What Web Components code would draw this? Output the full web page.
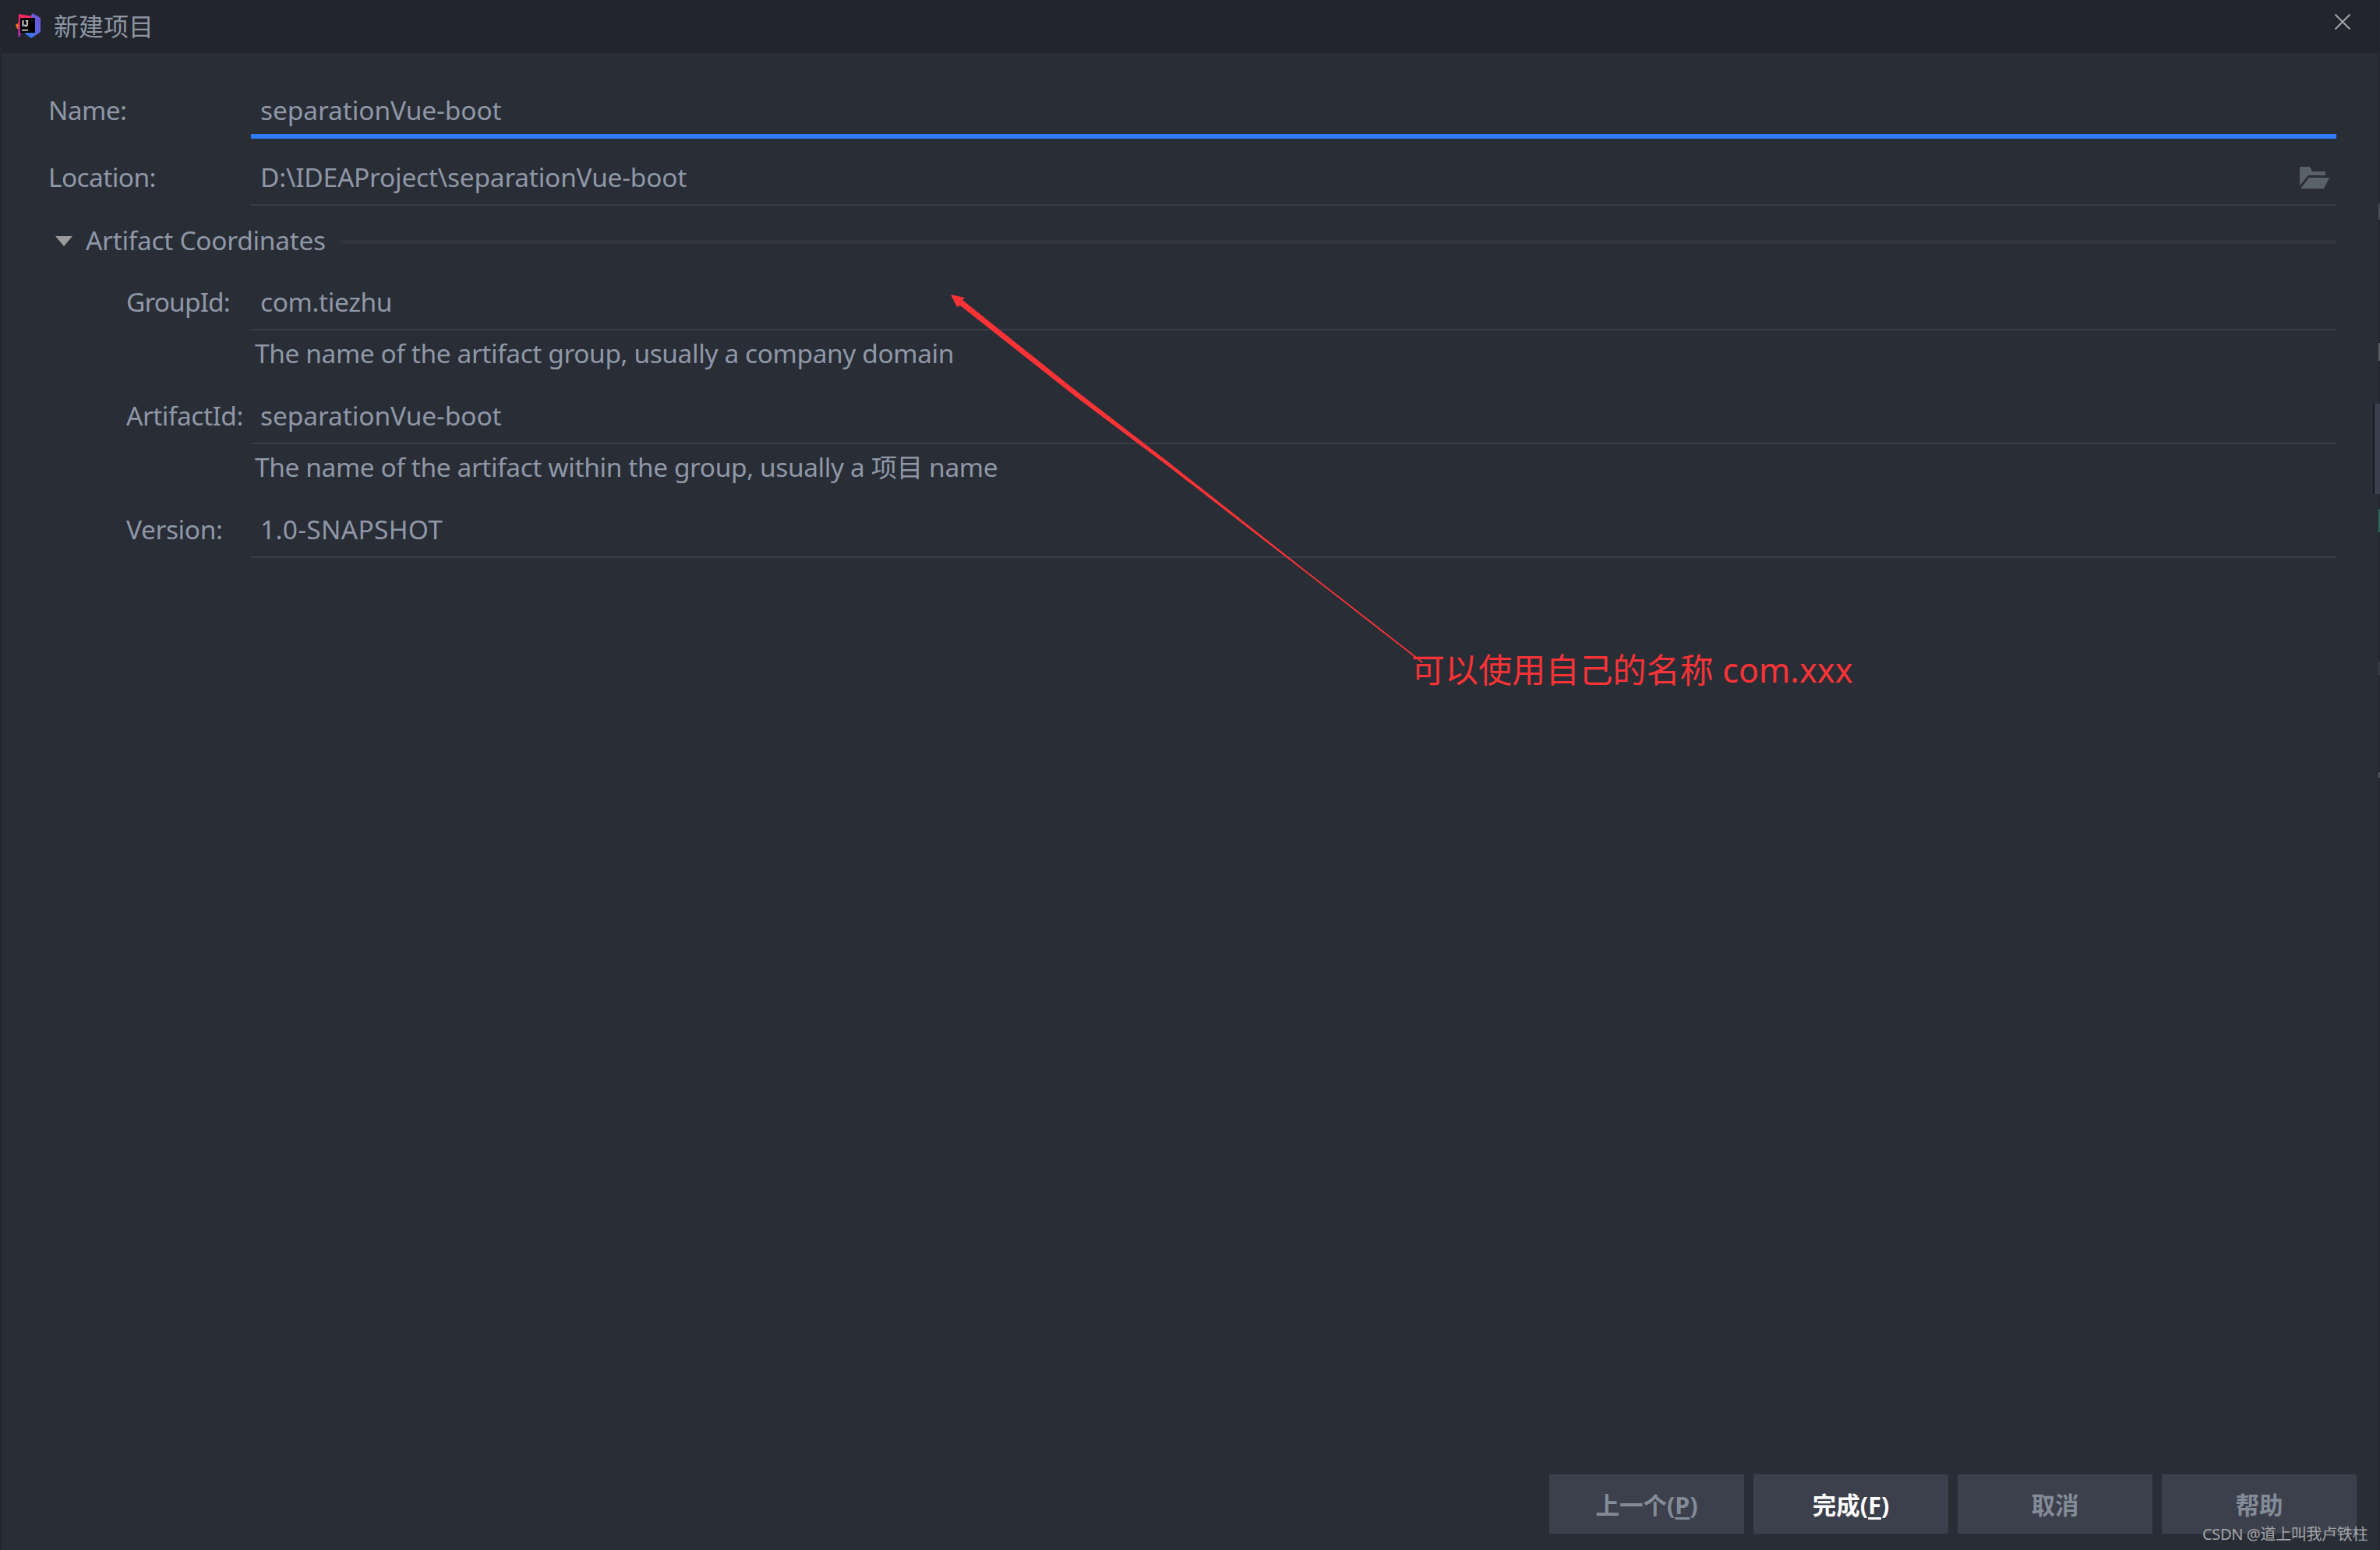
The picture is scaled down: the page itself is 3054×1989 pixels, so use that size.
<!DOCTYPE html>
<html lang="zh">
<head>
<meta charset="utf-8">
<title>新建项目</title>
<style>
html,body{margin:0;height:100%;background:#292d36;}
body{font-family:"Noto Sans","Noto Sans CJK SC",sans-serif;color:#8f97a7;overflow:hidden;}
</style>
</head>
<body>
<new-project-dialog>
    <title-bar slot="title">新建项目</title-bar>

    <form-field label="Name:" focused style="--track:-0.1px">separationVue-boot</form-field>
    <form-field label="Location:" style="margin-top:20px;--track:-0.24px" browse>D:\IDEAProject\separationVue-boot</form-field>
    <section-head style="margin-top:22px">Artifact Coordinates</section-head>
    <form-field label="GroupId:" nested style="margin-top:26px;--track:-0.4px;--label-track:-0.9px">com.tiezhu</form-field>
    <hint-text>The name of the artifact group, usually a company domain</hint-text>
    <form-field label="ArtifactId:" nested style="--track:-0.1px;--label-track:-0.5px">separationVue-boot</form-field>
    <hint-text>The name of the artifact within the group, usually a 项目 name</hint-text>
    <form-field label="Version:" nested style="--track:0.3px;--label-track:-0.4px">1.0-SNAPSHOT</form-field>

    <dialog-button slot="buttons" mnemonic="P">上一个</dialog-button>
    <dialog-button slot="buttons" mnemonic="F" primary>完成</dialog-button>
    <dialog-button slot="buttons">取消</dialog-button>
    <dialog-button slot="buttons">帮助</dialog-button>
</new-project-dialog>
<red-annotation>可以使用自己的名称 com.xxx</red-annotation>
<csdn-mark>CSDN @道上叫我卢铁柱</csdn-mark>

<script>
const dialogTemplate = document.createElement('template');
dialogTemplate.innerHTML = `
    <style>
    :host{display:flex;flex-direction:column;height:1989px;box-sizing:border-box;border-left:2px solid #23262e;border-right:2px solid #24272f;background:#292d36;position:relative;}
    #form{flex:1;padding:44px 54px 0 60px;}
    #buttons{display:flex;justify-content:flex-end;gap:12px;padding:0 28px 21px 0;}
    .peek{position:absolute;right:-2px;}
    </style>
    <slot name="title"></slot>
    <div id="form"><slot></slot></div>
    <div id="buttons"><slot name="buttons"></slot></div>
    <div class="peek" style="top:261px;width:2px;height:21px;background:#4a4e58"></div>
    <div class="peek" style="top:440px;width:2px;height:23px;background:#5a5d64"></div>
    <div class="peek" style="top:518px;width:9px;height:116px;background:#3a3e4d;border-left:2px solid #181a22;box-sizing:border-box"></div>
    <div class="peek" style="top:653px;width:2px;height:30px;background:#2b6d5c"></div>
    <div class="peek" style="top:849px;width:2px;height:17px;background:#3a3e46"></div>
    <div class="peek" style="top:991px;width:2px;height:7px;background:#55585f"></div>
`;
class NewProjectDialog extends HTMLElement {
    constructor() {
        super();
        this.attachShadow({mode: 'open'});
        this.shadowRoot.appendChild(dialogTemplate.content.cloneNode(true));
    }
}

const titleTemplate = document.createElement('template');
titleTemplate.innerHTML = `
    <style>
    :host{display:flex;align-items:center;height:68px;background:#22252d;padding:0 36px 0 18px;flex:none;}
    #logo{width:32px;height:32px;flex:none;margin-top:-2px;}
    #text{margin-left:17px;font-size:32px;line-height:68px;color:#8d95a3;flex:1;margin-top:-1px;}
    #close{width:20px;height:20px;flex:none;margin-top:-12px;}
    </style>
    <svg id="logo" viewBox="0 0 32 32">
        <defs>
            <linearGradient id="blue" x1="0" y1="1" x2="1" y2="0"><stop offset="0" stop-color="#2f7df2"/><stop offset="1" stop-color="#7a4fd0"/></linearGradient>
            <linearGradient id="pink" x1="0" y1="0" x2="0" y2="1"><stop offset="0" stop-color="#fe2857"/><stop offset="1" stop-color="#9a2ba8"/></linearGradient>
        </defs>
        <polygon points="22,0 32,6 32,24 20,32 12,26 16,8" fill="url(#blue)"/>
        <polygon points="0,15 6,11 8,20 2,20" fill="#f97a12"/>
        <polygon points="4,1 22,4 8,14 6,30 3,30" fill="url(#pink)"/>
        <rect x="6" y="6" width="19" height="19" fill="#000"/>
        <text x="8" y="17" font-family="Liberation Sans" font-weight="700" font-size="10" fill="#fff">IJ</text>
        <rect x="8" y="21" width="8" height="1.4" fill="#fff"/>
    </svg>
    <div id="text"><slot></slot></div>
    <svg id="close" viewBox="0 0 20 20"><path d="M0.5 0.5L19.5 19.5M19.5 0.5L0.5 19.5" stroke="#a4a6a9" stroke-width="2" fill="none"/></svg>
`;
class TitleBar extends HTMLElement {
    constructor() {
        super();
        this.attachShadow({mode: 'open'});
        this.shadowRoot.appendChild(titleTemplate.content.cloneNode(true));
    }
}

const fieldTemplate = document.createElement('template');
fieldTemplate.innerHTML = `
    <style>
    :host{display:flex;align-items:flex-end;height:66px;font-size:33.5px;line-height:40px;color:#8f97a7;}
    :host([nested]){padding-left:100px;}
    #label{width:260px;flex:none;padding-bottom:17px;box-sizing:border-box;white-space:nowrap;letter-spacing:var(--label-track,-0.6px);}
    :host([nested]) #label{width:160px;}
    #value{flex:1;height:66px;box-sizing:border-box;display:flex;align-items:flex-end;padding:0 9px 15px 12px;border-bottom:2px solid #393d49;}
    :host([focused]) #value{border-bottom:6px solid #2d7cf6;padding-bottom:11px;}
    #text{flex:1;letter-spacing:var(--track,0);}
    svg{display:none;width:38px;height:28px;flex:none;margin-bottom:5px;}
    :host([browse]) svg{display:block;}
    </style>
    <div id="label"></div>
    <div id="value">
        <div id="text"><slot></slot></div>
        <svg viewBox="0 0 38 28"><path fill="#59626b" d="M0 0H13L16 6H33V11H11L0 24ZM12 14H38L31 28H1Z"/></svg>
    </div>
`;
class FormField extends HTMLElement {
    constructor() {
        super();
        this.attachShadow({mode: 'open'});
        this.shadowRoot.appendChild(fieldTemplate.content.cloneNode(true));
    }
    connectedCallback() {
        this.shadowRoot.querySelector('#label').textContent = this.getAttribute('label');
    }
}

const sectionTemplate = document.createElement('template');
sectionTemplate.innerHTML = `
    <style>
    :host{display:flex;align-items:center;height:46px;font-size:33.5px;line-height:40px;color:#8f97a7;}
    #arrow{width:0;height:0;flex:none;margin-left:9px;border-left:11px solid transparent;border-right:11px solid transparent;border-top:13px solid #9b9b9b;}
    #text{margin-left:17px;white-space:nowrap;margin-top:-3px;letter-spacing:-0.3px;}
    #line{flex:1;height:5px;background:#31343e;margin-left:18px;margin-top:3px;}
    </style>
    <div id="arrow"></div>
    <div id="text"><slot></slot></div>
    <div id="line"></div>
`;
class SectionHead extends HTMLElement {
    constructor() {
        super();
        this.attachShadow({mode: 'open'});
        this.shadowRoot.appendChild(sectionTemplate.content.cloneNode(true));
    }
}

const hintTemplate = document.createElement('template');
hintTemplate.innerHTML = `
    <style>
    :host{display:block;height:80px;box-sizing:border-box;padding:9px 0 0 265px;font-size:33.5px;line-height:40px;letter-spacing:-0.42px;color:#8f97a7;white-space:nowrap;}
    </style>
    <slot></slot>
`;
class HintText extends HTMLElement {
    constructor() {
        super();
        this.attachShadow({mode: 'open'});
        this.shadowRoot.appendChild(hintTemplate.content.cloneNode(true));
    }
}

const buttonTemplate = document.createElement('template');
buttonTemplate.innerHTML = `
    <style>
    :host{display:flex;align-items:center;justify-content:center;width:250px;height:76px;background:#3c404c;color:#848b98;font-size:30.5px;font-weight:700;}
    :host([primary]){color:#fff;}
    u{text-underline-offset:4px;}
    </style>
    <span><slot></slot><span id="key"></span></span>
`;
class DialogButton extends HTMLElement {
    constructor() {
        super();
        this.attachShadow({mode: 'open'});
        this.shadowRoot.appendChild(buttonTemplate.content.cloneNode(true));
    }
    connectedCallback() {
        const key = this.getAttribute('mnemonic');
        if (key) {
            this.shadowRoot.querySelector('#key').innerHTML = '(<u>' + key + '</u>)';
        }
    }
}

const annotationTemplate = document.createElement('template');
annotationTemplate.innerHTML = `
    <style>
    :host{display:block;position:absolute;left:0;top:0;width:3054px;height:1989px;pointer-events:none;}
    svg{position:absolute;left:0;top:0;}
    #label{position:absolute;left:1811px;top:828px;font-size:43px;line-height:64px;letter-spacing:0.1px;color:#fb3336;white-space:nowrap;}
    </style>
    <svg width="3054" height="1989" viewBox="0 0 3054 1989">
        <polygon fill="#fb3336" points="1220,378 1238,382 1235,385 1380,500.8 1500,593.6 1680,735.7 1826,849.4 1825,851 1680,737.9 1500,599.1 1380,508.8 1232,392 1228,394"/>
    </svg>
    <div id="label"><slot></slot></div>
`;
class RedAnnotation extends HTMLElement {
    constructor() {
        super();
        this.attachShadow({mode: 'open'});
        this.shadowRoot.appendChild(annotationTemplate.content.cloneNode(true));
    }
}

const markTemplate = document.createElement('template');
markTemplate.innerHTML = `
    <style>
    :host{display:block;position:absolute;left:2826px;top:1956px;font-size:20px;line-height:26px;letter-spacing:-0.35px;color:#a3a5a8;white-space:nowrap;}
    </style>
    <slot></slot>
`;
class CsdnMark extends HTMLElement {
    constructor() {
        super();
        this.attachShadow({mode: 'open'});
        this.shadowRoot.appendChild(markTemplate.content.cloneNode(true));
    }
}

customElements.define('new-project-dialog', NewProjectDialog);
customElements.define('title-bar', TitleBar);
customElements.define('form-field', FormField);
customElements.define('section-head', SectionHead);
customElements.define('hint-text', HintText);
customElements.define('dialog-button', DialogButton);
customElements.define('red-annotation', RedAnnotation);
customElements.define('csdn-mark', CsdnMark);
</script>
</body>
</html>
